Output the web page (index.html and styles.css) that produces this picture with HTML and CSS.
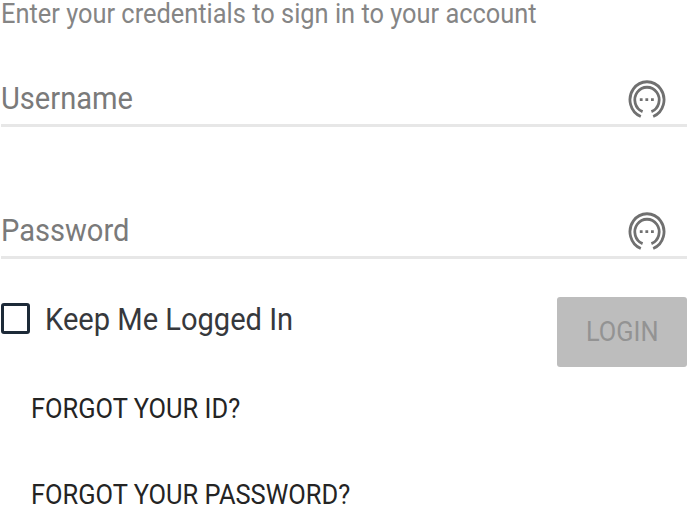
FILE: index.html
```
<!DOCTYPE html>
<html lang="en">
<head>
  <meta charset="UTF-8" />
  <meta name="viewport" content="width=device-width, initial-scale=1.0"/>
  <title>Sign In</title>
  <link rel="stylesheet" href="styles.css">
</head>
<body>

  <form class="login-form">
    <p class="intro"><span class="label">Enter your credentials to sign in to your account</span></p>

    <div class="field">
      <span class="label">Username</span>
      <svg class="field-icon" viewBox="0 0 38 40">
        <path d="M12.8 37.5A17 18 0 1 1 25.2 37.5" />
        <path d="M14.6 32.6A12.2 12.6 0 1 1 23.4 32.6" />
        <path class="dots" d="M11.8 20.7h2.8M17.4 20.7h2.8M23 20.7h2.8" />
      </svg>
    </div>

    <div class="field">
      <span class="label">Password</span>
      <svg class="field-icon" viewBox="0 0 38 40">
        <path d="M12.8 37.5A17 18 0 1 1 25.2 37.5" />
        <path d="M14.6 32.6A12.2 12.6 0 1 1 23.4 32.6" />
        <path class="dots" d="M11.8 20.7h2.8M17.4 20.7h2.8M23 20.7h2.8" />
      </svg>
    </div>

    <div class="actions">
      <div class="remember">
        <span class="checkbox"></span>
        <span class="label">Keep Me Logged In</span>
      </div>
      <button class="login-btn" type="button" disabled><span class="label">LOGIN</span></button>
    </div>

    <div class="links">
      <a class="link"><span class="label">FORGOT YOUR ID?</span></a>
      <a class="link"><span class="label">FORGOT YOUR PASSWORD?</span></a>
    </div>
  </form>

</body>
</html>
```
FILE: styles.css
```
html, body {
  margin: 0;
  padding: 0;
  height: 100%;
  overflow: hidden;
  font-family: Roboto, sans-serif;
  background: white;
}

.login-form {
  display: flex;
  flex-direction: column;
  padding: 0 2px 0 1px;
}

/* narrow lettering */
.label {
  display: inline-block;
  white-space: nowrap;
  transform: scaleX(0.938);
  transform-origin: left center;
}

.intro {
  margin: 0;
  height: 28px;
  line-height: 28px;
  font-size: 28px;
  color: #858585;
}

.intro .label {
  transform: scaleX(0.907);
}

.field {
  display: flex;
  justify-content: space-between;
  align-items: flex-start;
  height: 46px;
  margin-top: 50px;
  padding-right: 21px;
  border-bottom: 3px solid #e7e7e7;
  font-size: 31px;
  line-height: 42px;
  color: #7a7a7a;
}

.field + .field {
  margin-top: 83px;
}

.field-icon {
  width: 38px;
  height: 40px;
  margin-top: 1px;
  fill: none;
  stroke: #707070;
  stroke-width: 2.8;
}

.actions {
  display: flex;
  justify-content: space-between;
  margin-top: 38px;
}

.remember {
  display: flex;
  align-items: center;
  height: 44px;
  gap: 15px;
  font-size: 31px;
  color: #36383c;
}

.checkbox {
  box-sizing: border-box;
  width: 29px;
  height: 31px;
  margin-bottom: 2px;
  border: 3px solid #1d2a38;
  border-radius: 3px;
}

.login-btn {
  width: 130px;
  height: 70px;
  padding: 0 0 0 29px;
  border: none;
  border-radius: 3px;
  background: #bdbdbd;
  color: #939393;
  font-family: inherit;
  font-size: 27px;
  text-align: left;
}

.links {
  display: flex;
  flex-direction: column;
  gap: 46px;
  margin-top: 22px;
  padding-left: 30px;
}

.link {
  height: 40px;
  line-height: 40px;
  font-size: 27px;
  color: #242424;
}

.link .label {
  transform: scaleX(0.942);
}
```
